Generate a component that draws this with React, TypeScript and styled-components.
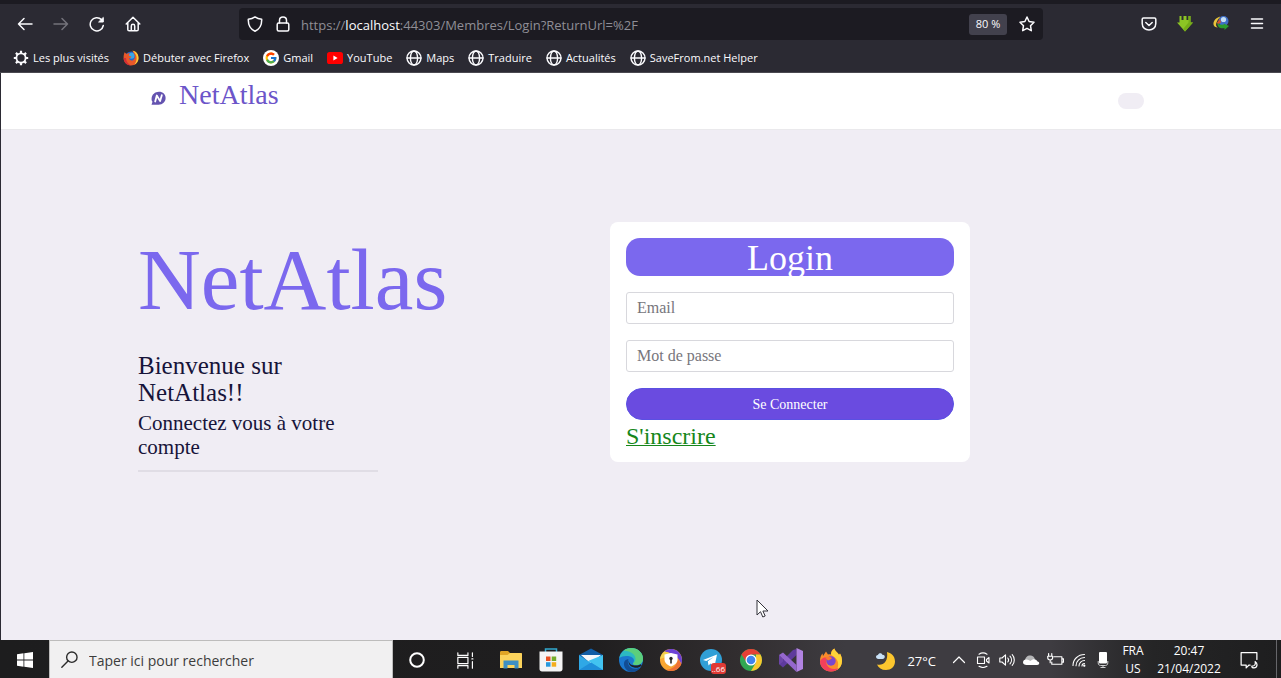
import React from "react";
import styled, { createGlobalStyle } from "styled-components";
import { FcGoogle } from "react-icons/fc";

const ui = `"Segoe UI", "Open Sans", "Noto Sans", sans-serif`;
const serif = `"Palatino Linotype", "Book Antiqua", Palatino, "Liberation Serif", serif`;

const GlobalStyle = createGlobalStyle`
  *, *::before, *::after { box-sizing: border-box; }
  body { margin: 0; background: #f0edf4; }
  button, input { font: inherit; margin: 0; }
  svg { display: block; flex: none; }
`;

const Screen = styled.div`
  position: relative;
  min-height: 100vh;
  display: flex;
  flex-direction: column;
  font-family: ${ui};
`;

/* Browser chrome */

const Chrome = styled.header`
  background: #2b2a33;
  border-top: 4px solid #1c1b22;
  border-bottom: 1px solid #4a4950;
  color: #fbfbfe;
`;

const Toolbar = styled.div`
  display: flex;
  align-items: center;
  height: 40px;
  padding: 0 6px 0 7px;
`;

const Spacer = styled.div`
  flex: 1;
`;

const ToolButton = styled.button<{ $dim?: boolean }>`
  display: flex;
  align-items: center;
  justify-content: center;
  width: 36px;
  height: 32px;
  padding: 0;
  border: 0;
  background: none;
  color: ${(p) => (p.$dim ? "#74737b" : "#fbfbfe")};
`;

const AddressBar = styled.div`
  flex: 9;
  min-width: 0;
  display: flex;
  align-items: center;
  height: 32px;
  padding: 0 6px;
  border-radius: 4px;
  background: #1c1b22;
`;

const AddressIcon = styled.button`
  display: flex;
  align-items: center;
  justify-content: center;
  width: 28px;
  height: 28px;
  padding: 0;
  border: 0;
  background: none;
  color: #fbfbfe;
  &:first-child { width: 20px; margin-right: 4px; }
  &:last-child { margin-left: 6px; margin-right: -4px; }
`;

const Url = styled.div`
  flex: 1;
  min-width: 0;
  overflow: hidden;
  white-space: nowrap;
  padding: 2px 0 0 4px;
  font-size: 13px;
  line-height: 20px;
  color: #8f8e96;
  outline: 0;
`;

const Host = styled.span`
  color: #fbfbfe;
`;

const ZoomBadge = styled.button`
  width: 38px;
  height: 21px;
  padding: 0;
  border: 0;
  border-radius: 3px;
  background: #42414d;
  color: #fbfbfe;
  font-size: 11px;
  line-height: 20px;
`;

const Bookmarks = styled.nav`
  display: flex;
  align-items: center;
  gap: 14px;
  height: 28px;
  padding: 0 13px;
`;

const Bookmark = styled.a`
  display: flex;
  align-items: center;
  gap: 4px;
  color: #fbfbfe;
  font-size: 11px;
  line-height: 18px;
  white-space: nowrap;
  text-decoration: none;
`;

/* Web page */

const Page = styled.div`
  flex: 1;
  display: flex;
  flex-direction: column;
  border-left: 1px solid #2b2a33;
  font-family: ${serif};
  color: #17143a;
`;

const Container = styled.div`
  width: 100%;
  max-width: 1006px;
  margin: 0 auto;
`;

const SiteHeader = styled.header`
  background: #fff;
  border-bottom: 1px solid #eae9ec;
`;

const SiteBar = styled(Container)`
  display: flex;
  align-items: center;
  justify-content: space-between;
  height: 56px;
`;

const Brand = styled.a`
  display: flex;
  align-items: center;
  gap: 13px;
  padding: 0 0 12px 13px;
  color: #6c55c9;
  font-size: 28px;
  line-height: 32px;
  text-decoration: none;
  svg { margin-top: 6px; }
`;

const Pill = styled.button`
  width: 26px;
  height: 16px;
  padding: 0;
  border: 0;
  border-radius: 8px;
  background: #f0edf4;
`;

const Main = styled.main`
  flex: 1;
  padding: 92px 0 96px;
  background: #f0edf4;
`;

const Columns = styled(Container)`
  display: grid;
  grid-template-columns: minmax(320px, 472px) 360px;
  align-items: start;
`;

const Intro = styled.section`
  padding-top: 10px;
`;

const Title = styled.h1`
  margin: 0 0 24px;
  color: #7b68ee;
  font-size: 87px;
  line-height: 96px;
  font-weight: 400;
`;

const Welcome = styled.div`
  width: 240px;
  padding-bottom: 11px;
  border-bottom: 2px solid #e0dde5;
`;

const Greeting = styled.h2`
  margin: 0 0 5px;
  font-size: 25px;
  line-height: 27px;
  font-weight: 400;
`;

const Lead = styled.p`
  margin: 0;
  font-size: 21px;
  line-height: 24px;
`;

const Card = styled.form`
  display: flex;
  flex-direction: column;
  padding: 16px;
  border-radius: 8px;
  background: #fff;
`;

const CardTitle = styled.h2`
  margin: 0 0 16px;
  height: 38px;
  border-radius: 14px;
  background: #7b68ee;
  color: #fff;
  font-size: 36px;
  line-height: 40px;
  font-weight: 400;
  text-align: center;
`;

const Field = styled.input`
  width: 100%;
  height: 32px;
  margin-bottom: 16px;
  padding: 0 10px;
  border: 1px solid #d8d8dd;
  border-radius: 3px;
  background: #fff;
  font-size: 16px;
  color: #17143a;
  &::placeholder { color: #77767c; opacity: 1; }
`;

const Submit = styled.button`
  height: 32px;
  padding: 2px 0 0;
  border: 1px solid #5a50e2;
  border-radius: 16px;
  background: #6a4be0;
  color: #fff;
  font-size: 14px;
  line-height: 20px;
`;

const SignUp = styled.a`
  align-self: flex-start;
  padding-top: 3px;
  height: 26px;
  color: #16871b;
  font-size: 24px;
  line-height: 26px;
  text-decoration: underline;
  text-decoration-thickness: 1px;
`;

const Pointer = styled.svg`
  position: absolute;
  left: 756px;
  top: 599px;
  pointer-events: none;
`;

/* Taskbar */

const Taskbar = styled.footer`
  display: flex;
  align-items: stretch;
  height: 38px;
  background: linear-gradient(90deg, #1d1d1e 0%, #1f1e1f 46%, #322e30 58%, #3e3c41 66%, #3e3c41 82%, #252526 90%, #1e1e1f 100%);
  color: #fff;
  padding: 0 4px 0 1px;
`;

const TaskButton = styled.button<{ $w: number }>`
  flex: none;
  display: flex;
  align-items: center;
  justify-content: center;
  width: ${(p) => p.$w}px;
  padding: 2px 0 0;
  border: 0;
  background: none;
  color: #fff;
`;

const Search = styled.label`
  flex: none;
  display: flex;
  align-items: center;
  gap: 11px;
  width: 344px;
  padding: 0 11px;
  border: 1px solid #bdbcbc;
  border-bottom: 0;
  background: #f1f0f1;
  color: #2b2b2b;
`;

const SearchInput = styled.input`
  flex: 1;
  min-width: 0;
  padding: 3px 0 0;
  border: 0;
  outline: 0;
  background: none;
  font-size: 14px;
  line-height: 20px;
  &::placeholder { color: #3c3c3c; opacity: 1; }
`;

const Apps = styled.nav`
  display: flex;
  margin-left: 2px;
`;

const AppIcon = styled.span`
  position: relative;
  display: block;
`;

const Badge = styled.span`
  position: absolute;
  right: -3px;
  bottom: -2px;
  padding: 0 1px;
  border-radius: 3px;
  background: #e03a35;
  color: #fff;
  font-size: 8px;
  line-height: 11px;
`;

const Tray = styled.div`
  display: flex;
  margin-left: auto;
`;

const Weather = styled.button`
  display: flex;
  align-items: center;
  gap: 11px;
  padding: 3px 11px 0 0;
  border: 0;
  background: none;
  color: #fff;
  font-size: 13px;
  line-height: 20px;
`;

const TwoLines = styled.button<{ $w: number }>`
  flex: none;
  width: ${(p) => p.$w}px;
  padding: 2px 0 0;
  border: 0;
  background: none;
  color: #fff;
  font-size: 12px;
  line-height: 18px;
  text-align: center;
  white-space: nowrap;
  span { display: block; }
`;

const PeekEdge = styled.div`
  width: 1px;
  margin-left: 5px;
  background: #66666a;
`;

type Stroke = { children: React.ReactNode; size?: number; w?: number; view?: number };

const Line = ({ children, size = 16, w = 1.5, view = 16 }: Stroke) => (
  <svg width={size} height={size} viewBox={`0 0 ${view} ${view}`} fill="none" stroke="currentColor" strokeWidth={w} strokeLinecap="round" strokeLinejoin="round" aria-hidden="true">
    {children}
  </svg>
);

const Globe = () => (
  <Line w={1.4}>
    <circle cx="8" cy="8" r="7" />
    <ellipse cx="8" cy="8" rx="3.6" ry="7" />
    <path d="M1 8h14" />
  </Line>
);

const Gear = () => (
  <svg width="16" height="16" viewBox="0 0 16 16" fill="none" stroke="#fbfbfe" aria-hidden="true">
    <circle cx="8" cy="8" r="4.6" strokeWidth="1.8" />
    <g strokeWidth="2.2">
      <path d="M8 .8v2.600M8 12.600v2.600M.8 8h2.600M12.600 8h2.600M2.900 2.900l1.900 1.900M11.200 11.200l1.900 1.900M2.900 13.100l1.900-1.900M11.200 4.800l1.900-1.900" />
    </g>
  </svg>
);

const OldFirefox = () => (
  <svg width="16" height="16" viewBox="0 0 16 16" aria-hidden="true">
    <circle cx="8.4" cy="8" r="6.6" fill="#2766c9" />
    <circle cx="8.6" cy="5.8" r="3" fill="#39a7e6" />
    <path d="M1.6 2.2 3.5 4c1-.8 2.4-1 3.5-.5-1.2.9-1.3 1.7-.5 2.6l2 .3-.9 1.4-1.6.8c.8 2 2.800 2.500 4.400 1.300 2-1.500 1.900-4.300.6-6.200L9.500.8C13.200 1.200 15.700 4.500 15.500 8.500 15.200 12.700 12 15.500 8 15.500 4 15.500.9 12.500.6 8.600.5 6.200.8 4 1.600 2.200Z" fill="#e8582a" />
    <path d="M9.500.8c3.700.4 6.200 3.700 6 7.700-.2 3-1.900 5.200-4.200 6.200 2-2.600 2.600-5.200 2.200-8C13 4.400 11.600 2.300 9.500.8Z" fill="#fccb35" />
    <path d="M.7 8c0 4 3 7.500 7.300 7.500-2.600-1.300-4.800-3.500-5-7.500Z" fill="#d42d35" />
  </svg>
);

const YouTube = () => (
  <svg width="16" height="16" viewBox="0 0 16 16" aria-hidden="true">
    <rect x="0" y="2" width="16" height="12" rx="2.600" fill="#f00" />
    <path d="m6.400 5.600 4.200 2.400-4.200 2.400Z" fill="#fff" />
  </svg>
);

const GoogleDisc = () => (
  <svg width="16" height="16" viewBox="0 0 16 16" aria-hidden="true">
    <circle cx="8" cy="8" r="8" fill="#fff" />
    <FcGoogle x="1.500" y="1.500" width="13" height="13" size={13} />
  </svg>
);

const DownArrow = () => (
  <svg width="18" height="18" viewBox="0 0 18 18" aria-hidden="true">
    <path d="M3.500 1h2v4h2V1h3v4h2V1h2v6.500H17L9 16.500 1 7.500h2.500Z" fill="#8cc424" />
    <path d="M12.500 1h2v6.500H17L9 16.500l-2-2.300 5.500-6.700Z" fill="#76ad18" />
  </svg>
);

const Idm = () => (
  <svg width="18" height="18" viewBox="0 0 18 18" aria-hidden="true">
    <circle cx="11.500" cy="6" r="5" fill="#3f6fc9" />
    <circle cx="11.500" cy="4.500" r="2.600" fill="#c4dff5" />
    <path d="M8.500 1.500C4 2.500 1 6 1.500 9.500c.3 2 2 3 4.300 3-1.500-1-2-2.200-1.600-4C4.800 6 6.500 3.600 8.500 1.500Z" fill="#e8c43a" />
    <path d="M5.500 6.500c0 2.700 2.500 3.700 6.300 3.100V8.500L17 11l-4.500 4v-1.900c-4 .7-8-.6-7-6.600Z" fill="#2b9c2f" />
    <path d="M5 7.500 8 4l1 3.500-3 1.500Z" fill="#d8542e" />
  </svg>
);

const BrandMark = () => (
  <svg width="15" height="15" viewBox="0 0 15 15" aria-hidden="true">
    <path d="M8 .8c4 0 6.600 2.700 6.600 6.300 0 3.800-3 6.700-7 6.700H.5l1-3C.6 9.800.5 8.600.6 7.400.9 3.600 4 .8 8 .8Z" fill="#6453b0" />
    <path d="m4.200 10.500 1.600-6 3.300 5.600 1.700-5.900" fill="none" stroke="#fff" strokeWidth="1.800" strokeLinejoin="round" strokeLinecap="round" />
  </svg>
);

const apps: { name: string; art: React.ReactNode; badge?: string }[] = [
  {
    name: "Explorateur de fichiers",
    art: (
      <>
        <path d="M1 4.500C1 3.500 1.500 3 2.500 3H9l2 2h10.500c.8 0 1.500.6 1.500 1.500V19H1Z" fill="#e0a526" />
        <path d="M1 7h7.500L11 5h11.500l.5 1v14H1Z" fill="#fbd35c" />
        <path d="M4.500 20.500v-8h15v8h-4V17h-7v3.500Z" fill="#3d8fc4" />
      </>
    ),
  },
  {
    name: "Microsoft Store",
    art: (
      <>
        <path d="M6.500 4V1h11v3" fill="none" stroke="#32a9cf" strokeWidth="1.500" />
        <path d="M.5 3.500h23V21c0 1.500-1 2.500-2.500 2.500H3C1.500 23.500.5 22.500.5 21Z" fill="#f4f4f4" />
        <path d="M7 8.500h4.500V13H7Z" fill="#e85022" />
        <path d="M12.700 8.500h4.500V13h-4.500Z" fill="#75ad2a" />
        <path d="M7 14.200h4.500v4.500H7Z" fill="#2899dd" />
        <path d="M12.700 14.200h4.500v4.500h-4.500Z" fill="#f4ad1c" />
      </>
    ),
  },
  {
    name: "Courrier",
    art: (
      <>
        <path d="M0 7 12 .5 24 7v5H0Z" fill="#115da5" />
        <path d="M2 7h20l-10 9Z" fill="#f4f7fa" />
        <path d="M0 7v15h24V7L12 15Z" fill="#2fa8e6" />
        <path d="M24 7v15L9 13Z" fill="#42c3f0" />
        <path d="M0 22 12 14.500 24 22Z" fill="#1f8ed9" />
      </>
    ),
  },
  {
    name: "Microsoft Edge",
    art: (
      <>
        <circle cx="12" cy="12" r="12" fill="#1b78cf" />
        <path d="M.3 10C1.600 4 6.200 0 12 0c7 0 12 5 12 10.500 0 4.500-3.200 6.500-6.500 6.500-2.700 0-4.500-1.200-3.200-2.600 1.500-1.600.8-5-3.200-6C7 7.400 2.600 8 .3 10Z" fill="#2cb9c2" />
        <path d="M12 0c7 0 12 5 12 10.500 0 4.500-3.200 6.500-6.500 6.500-2 0-3.500-.7-3.600-1.600 3-1.500 3.500-5.500 1-8.600C12.500 3.600 8 2.500 4.500 2.700 6.600 1 9.200 0 12 0Z" fill="#5ccf7c" />
        <path d="M9.500 11c-2 4 .6 9.700 6.700 9.700 2.200 0 4.300-.6 5.800-1.800C20 22 16.400 24 12.500 24 7.500 23.500 4.500 19 5 15c.3-2.300 2-3.700 4.500-4Z" fill="#124d94" />
        <path d="M10 12c-.6 3 1.500 5.200 5.500 5.500 2.500.2 4.500-.2 6.300-1.300l1 1.200c-2 2-4.500 2.600-6.800 2.300-4.500-.6-7.500-4-6-7.700Z" fill="#202024" />
      </>
    ),
  },
  {
    name: "Navigateur sécurisé",
    art: (
      <>
        <circle cx="12" cy="12" r="11" fill="#f8a632" />
        <path d="M5 3.500C10-.8 19 .4 22 7.500c1.300 3 1.200 6 .3 8.500C20 10 15 5 5 3.500Z" fill="#6c42d6" />
        <path d="M1 11c.6-3 2-5.600 4.500-7.500C9 4 11 5 13 7Z" fill="#f4d04e" />
        <path d="M22.300 16A11 11 0 0 1 7 21.800C13 21.500 18 18 19 11Z" fill="#ef7136" />
        <path d="m12 5 6.500 1.500v5c0 3.500-2.800 5.500-6.500 7-3.700-1.500-6.500-3.500-6.500-7v-5Z" fill="#fff" />
        <circle cx="12" cy="10.500" r="1.700" fill="#27272a" />
        <path d="M11.200 11h1.600v4.500h-1.600Z" fill="#27272a" />
      </>
    ),
  },
  {
    name: "Telegram",
    badge: "..66",
    art: (
      <>
        <circle cx="12" cy="12" r="11" fill="#319fd6" />
        <path d="m4 12 14-5.500-2.500 12-4-3-2 2-.7-4.200 6-4.300-7.500 4Z" fill="#fff" />
      </>
    ),
  },
  {
    name: "Google Chrome",
    art: (
      <>
        <circle cx="12" cy="12" r="11" fill="#31a753" />
        <path d="M12 12 2.500 6.500A11 11 0 0 1 21.500 6.500H12Z" fill="#e53f35" />
        <path d="M21.500 6.500A11 11 0 0 1 12 23l5-8.500V6.500Z" fill="#f9c72e" />
        <path d="M2.500 6.500 8 15l4-8.500Z" fill="#e53f35" />
        <circle cx="12" cy="12" r="5.500" fill="#fff" />
        <circle cx="12" cy="12" r="4.300" fill="#4083ee" />
      </>
    ),
  },
  {
    name: "Visual Studio",
    art: (
      <>
        <path d="m1 17 3 2.500L17.500 7V1L14 2 1 15Z" fill="#5e3a9d" />
        <path d="M0 7v10l4-3.500v-3Z" fill="#6c45a8" />
        <path d="M17.500 0 24 3v18l-6.500 3Z" fill="#b183e2" />
        <path d="M0 7 4 4.500 17.500 17v7Z" fill="#9567cd" />
      </>
    ),
  },
  {
    name: "Firefox",
    art: (
      <>
        <path d="M12 23.500C5.700 23.500 1 19 1 13c0-3.500 1.200-6 2.500-7.500L4 8l3-4.500 2 3c1-.3 2-.3 3 0C11.500 4 13 1.700 15.500.5c.2 3 3.500 3.600 4.500 6.500l1-1.500C22.500 8 23 10.500 23 13c0 6-4.700 10.500-11 10.500Z" fill="#fa8c2b" />
        <path d="M15.500.5C15.700 3.500 19 4.100 20 7l1-1.500C22.500 8 23 10.500 23 13c0 4-2 7-5 9 2-5 1.500-9-1.500-12-2-2-4.500-3-4.500-3.500 0-2.500 1.500-4.800 3.500-6Z" fill="#fed439" />
        <path d="M1 13c0 6 4.700 10.500 11 10.500 3.500 0 6-1.300 8-3.500-5 2-10 1-12-3-1.500-3-.7-6 1-7.500-3-1-6 0-8 3.500Z" fill="#f2405b" />
        <circle cx="12" cy="13" r="4.700" fill="#7947ce" />
        <path d="M6 9.500c2-1.300 5-1 7 .5-1 1.500-2.500 1.500-4 2.500Z" fill="#fb7a2c" />
      </>
    ),
  },
];

const trayIcons: { name: string; icon: React.ReactNode }[] = [
  { name: "Afficher les icônes cachées", icon: <Line w={1.200}><path d="m2.500 10.500 5.500-5.500 5.500 5.500" /></Line> },
  {
    name: "Réunion",
    icon: (
      <Line w={1.100}>
        <rect x="2.500" y="5" width="7" height="6.500" />
        <path d="m11.500 7.500 2.500-2v5.500l-2.500-2ZM4 2.200c2.500-1.600 5.500-1.600 8 0M4 14.300c2.500 1.500 5.500 1.500 8 0" />
      </Line>
    ),
  },
  {
    name: "Volume",
    icon: (
      <Line w={1.100}>
        <path d="M.8 6v4H3l3.500 3.200V2.800L3 6ZM8.800 6c1 1.200 1 2.800 0 4M11 4.200c2 2.200 2 5.400 0 7.600M13.200 2.700c2.800 3 2.800 7.600 0 10.600" />
      </Line>
    ),
  },
  {
    name: "OneDrive",
    icon: (
      <svg width="18" height="16" viewBox="0 0 18 16" aria-hidden="true">
        <path d="M3 9C3 5 6 3 9 3.500c2 .3 3.500 2 4 4L8 10Z" fill="#b6b6b8" />
        <path d="M4.500 13C2.500 13 1 12 1 10.300c0-1.600 1.300-2.700 3-2.800 2-.2 3 .7 4.500 1.500C10 7.500 11.500 7 13 7.400c1.500.3 2.300 1.300 2.500 2.200 1 .1 1.700.8 1.700 1.700 0 1-.8 1.700-2 1.700Z" fill="#fff" />
      </svg>
    ),
  },
  {
    name: "Batterie",
    icon: (
      <Line w={1.100} size={17}>
        <path d="M6.500 4.500H14v7H4.500V9.500M14 6.500h1.500v3H14M1.500 1.500V4M4.500 1.500V4M.7 4h4.600v1.500c0 1-.8 2-2.300 2s-2.300-1-2.300-2ZM3 7.500V10" />
      </Line>
    ),
  },
  {
    name: "Wi-Fi",
    icon: (
      <Line w={1.100}>
        <path d="M2 13.500C2 7.500 7 2.500 13.500 2.500M5 13.800c0-4.500 4-8.300 8.500-8.300M8 14c0-3 2.500-5.500 5.500-5.500M11 14c0-1.500 1-2.500 2.500-2.500" />
        <circle cx="13.300" cy="13.700" r=".6" fill="currentColor" />
      </Line>
    ),
  },
  {
    name: "Microphone",
    icon: (
      <svg width="12" height="18" viewBox="0 0 12 18" aria-hidden="true">
        <rect x="2" y="1" width="8" height="11.500" rx="1" fill="#fff" />
        <path d="M1.200 10v2c0 1.500 1 2.500 2.300 2.500h5c1.300 0 2.300-1 2.300-2.500v-2M6 14.500V17M3.500 16.500h5" fill="none" stroke="#cfcfd0" />
      </svg>
    ),
  },
];

export default function App() {
  return (
    <Screen>
      <GlobalStyle />
      <Chrome>
        <Toolbar>
          <ToolButton aria-label="Page précédente"><Line><path d="M15 8H1.500M7 2.500 1.500 8 7 13.500" /></Line></ToolButton>
          <ToolButton $dim aria-label="Page suivante"><Line><path d="M1 8h13.500M9 2.500 14.500 8 9 13.500" /></Line></ToolButton>
          <ToolButton aria-label="Actualiser">
            <Line>
              <path d="M14.300 9.500A6.600 6.600 0 1 1 12.500 3.600" />
              <path d="M14.300 1.800v4.200H10Z" fill="currentColor" strokeWidth="1" />
            </Line>
          </ToolButton>
          <ToolButton aria-label="Accueil">
            <Line><path d="M1.200 8 8 1.300 14.800 8M2.800 6.800v6.700c0 .8.500 1.300 1.300 1.300h7.800c.8 0 1.300-.5 1.300-1.300V6.800M6.300 14.500V10c0-2.200 3.400-2.200 3.400 0v4.500" /></Line>
          </ToolButton>
          <Spacer />
          <AddressBar>
            <AddressIcon aria-label="Protection">
              <Line><path d="M8 .9c2 1.500 4 2.200 6.700 2.400.2 5.500-1.500 9.700-6.700 11.900C2.800 13 1.100 8.800 1.300 3.300 4 3.100 6 2.400 8 .9Z" /></Line>
            </AddressIcon>
            <AddressIcon aria-label="Sécurité de la connexion">
              <Line>
                <rect x="2.200" y="7" width="11.600" height="8" rx="1.500" />
                <path d="M4.500 7V4.300c0-4.400 7-4.400 7 0V7" />
              </Line>
            </AddressIcon>
            <Url role="textbox" aria-label="Adresse" tabIndex={0}>
              https://<Host>localhost</Host>:44303/Membres/Login?ReturnUrl=%2F
            </Url>
            <ZoomBadge>80 %</ZoomBadge>
            <AddressIcon aria-label="Marquer cette page">
              <Line><path d="m8 1 2.100 4.500 4.900.7-3.500 3.500.8 5L8 12.300l-4.300 2.400.8-5L1 6.200l4.900-.7Z" /></Line>
            </AddressIcon>
          </AddressBar>
          <Spacer />
          <ToolButton aria-label="Pocket">
            <Line><path d="M2.500 2h11c.8 0 1.300.5 1.300 1.300v4.200c0 8.700-13.600 8.700-13.600 0V3.300C1.200 2.500 1.700 2 2.500 2ZM4.800 6.500 8 9.500l3.200-3" /></Line>
          </ToolButton>
          <ToolButton aria-label="Téléchargements"><DownArrow /></ToolButton>
          <ToolButton aria-label="Extension IDM"><Idm /></ToolButton>
          <ToolButton aria-label="Menu"><Line><path d="M2.500 3h11M2.500 7.500h11M2.500 12h11" /></Line></ToolButton>
        </Toolbar>
        <Bookmarks>
          <Bookmark href="#"><Gear />Les plus visités</Bookmark>
          <Bookmark href="#"><OldFirefox />Débuter avec Firefox</Bookmark>
          <Bookmark href="#"><GoogleDisc />Gmail</Bookmark>
          <Bookmark href="#"><YouTube />YouTube</Bookmark>
          <Bookmark href="#"><Globe />Maps</Bookmark>
          <Bookmark href="#"><Globe />Traduire</Bookmark>
          <Bookmark href="#"><Globe />Actualités</Bookmark>
          <Bookmark href="#"><Globe />SaveFrom.net Helper</Bookmark>
        </Bookmarks>
      </Chrome>

      <Page>
        <SiteHeader>
          <SiteBar>
            <Brand href="#"><BrandMark />NetAtlas</Brand>
            <Pill aria-label="Menu du site" />
          </SiteBar>
        </SiteHeader>
        <Main>
          <Columns>
            <Intro>
              <Title>NetAtlas</Title>
              <Welcome>
                <Greeting>Bienvenue sur NetAtlas!!</Greeting>
                <Lead>Connectez vous à votre compte</Lead>
              </Welcome>
            </Intro>
            <Card onSubmit={(e) => e.preventDefault()}>
              <CardTitle>Login</CardTitle>
              <Field type="email" placeholder="Email" aria-label="Email" />
              <Field type="password" placeholder="Mot de passe" aria-label="Mot de passe" />
              <Submit type="submit">Se Connecter</Submit>
              <SignUp href="#">S'inscrire</SignUp>
            </Card>
          </Columns>
        </Main>
      </Page>

      <Taskbar>
        <TaskButton $w={48} aria-label="Démarrer">
          <svg width="16" height="16" viewBox="0 0 16 16" fill="#fff" aria-hidden="true">
            <path d="M0 2.200 6.500 1.300v6.300H0ZM7.300 1.200 16 0v7.600H7.300ZM0 8.400h6.500v6.300L0 13.800ZM7.300 8.400H16V16l-8.700-1.200Z" />
          </svg>
        </TaskButton>
        <Search>
          <Line size={17} w={1.300}><circle cx="10.200" cy="5.800" r="4.900" /><path d="M6.600 9.400.8 15.200" /></Line>
          <SearchInput type="search" placeholder="Taper ici pour rechercher" aria-label="Rechercher" />
        </Search>
        <TaskButton $w={48} aria-label="Cortana"><Line w={2}><circle cx="8" cy="8" r="6.800" /></Line></TaskButton>
        <TaskButton $w={48} aria-label="Affichage des tâches">
          <Line w={1.100} size={17}><path d="M.8.800v2.400h9.500V.8M.8 5h9.500v6H.8ZM.8 15.200v-2.400h9.500v2.400M14.500.8v3.400M14.500 9v6.200M14 6.500h1" /></Line>
        </TaskButton>
        <Apps>
          {apps.map((app) => (
            <TaskButton $w={40} key={app.name} aria-label={app.name}>
              <AppIcon>
                <svg width="24" height="24" viewBox="0 0 24 24" aria-hidden="true">{app.art}</svg>
                {app.badge && <Badge>{app.badge}</Badge>}
              </AppIcon>
            </TaskButton>
          ))}
        </Apps>
        <Tray>
          <Weather>
            <svg width="21" height="20" viewBox="0 0 21 20" aria-hidden="true">
              <path d="M12 1c3.500.8 8 3.500 8 9.500 0 5-4 8.500-9 8.500-4.500 0-7.500-2-9-5.500 6 1.500 11.500-3 10-12.500Z" fill="#fcc62e" />
              <path d="M3.500 8C1.800 8 1 7 1 5.800 1 4.600 2 3.800 3 3.900 3.500 2 6.500 1.700 7.300 3.700 8.800 3.500 9.800 4.500 9.800 5.800 9.800 7 9 8 7.500 8Z" fill="#c8e1f7" />
            </svg>
            27°C
          </Weather>
          {trayIcons.map((t) => (
            <TaskButton $w={24} key={t.name} aria-label={t.name}>{t.icon}</TaskButton>
          ))}
          <TwoLines $w={36}><span>FRA</span><span>US</span></TwoLines>
          <TwoLines $w={76}><span>20:47</span><span>21/04/2022</span></TwoLines>
          <TaskButton $w={44} aria-label="Notifications">
            <Line size={18} w={1.100}><path d="M15 7.500V1.500H1v11h4.500V15L8 12.500h1M10.500 13.500c2.500 0 3.500-1.500 3-4 2.500 1.500 2 5.500-1 5.500-1 0-2-.7-2-1.500Z" /></Line>
          </TaskButton>
          <PeekEdge />
        </Tray>
      </Taskbar>

      <Pointer width="13" height="19" viewBox="0 0 13 19" aria-hidden="true">
        <path d="M1 1v15l3.500-3.300L6.800 18l2.400-1-2.300-5H12Z" fill="#fff" stroke="#33323a" />
      </Pointer>
    </Screen>
  );
}
